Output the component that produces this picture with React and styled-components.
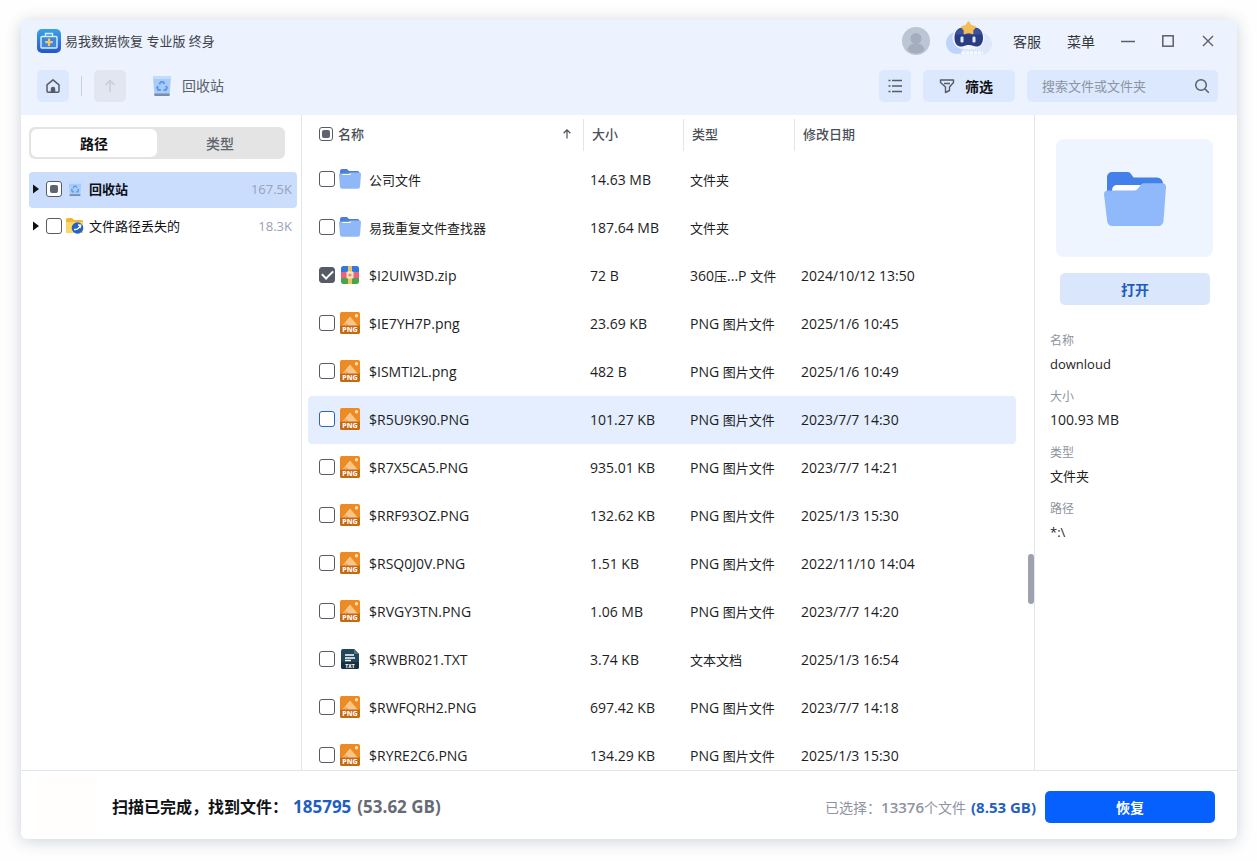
import React, { Component } from 'react';
import styled, { createGlobalStyle, css } from 'styled-components';

const GlobalStyle = createGlobalStyle`
  * {
    box-sizing: border-box;
  }

  body {
    margin: 0;
    background: #fefefe;
    color: #1c1e22;
    font-family: 'Open Sans', 'Noto Sans CJK SC', sans-serif;
    font-size: 13px;
    line-height: 20px;
  }

  button,
  input {
    font-family: inherit;
  }

  svg {
    display: block;
    flex: none;
  }
`;

const Page = styled.div`
  height: 100vh;
  padding: 20px 20px 22px 21px;
`;
const Window = styled.div`
  height: 100%;
  display: flex;
  flex-direction: column;
  overflow: hidden;
  border-radius: 6px;
  background: #ffffff;
  box-shadow: 0 2px 16px rgba(50, 65, 105, 0.24);
`;

/* header */
const Header = styled.header`
  background: #ecf3fe;
`;
const TitleBar = styled.div`
  height: 42px;
  padding: 0 9px 0 16px;
  display: flex;
  align-items: center;
`;
const Title = styled.h1`
  margin: 0 auto 0 4px;
  font-size: 13px;
  font-weight: 400;
  color: #3c4048;
`;
const RoundButton = styled.button`
  margin-right: ${props => props.$gap}px;
  padding: 0;
  border: 0;
  background: none;
`;
const MenuButton = styled.button`
  padding: 0 13px;
  border: 0;
  background: none;
  font-size: 14px;
  color: #33363d;
`;
const WindowButton = styled.button`
  width: 40px;
  height: 32px;
  padding: 0;
  border: 0;
  display: flex;
  align-items: center;
  justify-content: center;
  background: none;
  color: #5b5f68;
`;
const Toolbar = styled.div`
  padding: 8px 19px 13px 16px;
  display: flex;
  align-items: center;
  gap: 12px;
`;
const ToolButton = styled.button`
  min-width: 32px;
  height: 32px;
  padding: ${props => props.$wide ? '0 22px 0 16px' : '0'};
  border: 0;
  border-radius: 5px;
  display: flex;
  align-items: center;
  justify-content: center;
  gap: 10px;
  background: #dbe8fd;
  color: #565b66;

  &:disabled {
    background: #e1e6f0;
    color: #c9ced8;
  }
`;
const ToolLabel = styled.span`
  font-size: 14px;
  font-weight: 700;
  color: #0f1115;
`;
const Divider = styled.span`
  width: 1px;
  height: 20px;
  background: #c9d0dc;
`;
const Crumb = styled.div`
  margin: 0 auto 0 14px;
  display: flex;
  align-items: center;
  gap: 10px;
  font-size: 14px;
  color: #5a5f69;
`;
const Search = styled.label`
  width: 191px;
  height: 32px;
  padding: 0 8px 0 15px;
  border-radius: 5px;
  display: flex;
  align-items: center;
  background: #dbe8fd;
  color: #5b5f68;
`;
const SearchInput = styled.input`
  flex: 1;
  min-width: 0;
  padding: 0;
  border: 0;
  outline: 0;
  background: none;
  font-size: 13px;

  &::placeholder {
    color: #8e94a1;
    opacity: 1;
  }
`;

/* body */
const Body = styled.div`
  flex: 1;
  min-height: 0;
  display: flex;
`;
const Sidebar = styled.aside`
  width: 281px;
  flex: none;
  padding: 12px 4px 0 8px;
  border-right: 1px solid #e2e6ec;
`;
const Tabs = styled.div`
  height: 32px;
  margin: 0 12px 13px 0;
  padding: 2px;
  border-radius: 6px;
  display: flex;
  background: #e4e4e5;
`;
const Tab = styled.button`
  flex: 1;
  padding: 0;
  border: 0;
  border-radius: 6px;
  font-size: 14px;
  font-weight: ${props => props.$active ? '700' : '500'};
  color: ${props => props.$active ? '#0f1115' : '#5f646e'};
  background: ${props => props.$active ? '#ffffff' : 'none'};
`;
const TreeRow = styled.div`
  height: 36px;
  margin-bottom: 1px;
  padding: 0 5px 2px 4px;
  border-radius: 4px;
  display: flex;
  align-items: center;
  background: ${props => props.$active ? '#cbddfd' : 'none'};
`;
const TreeLabel = styled.label`
  flex: 1;
  margin-left: 4px;
  display: flex;
  align-items: center;
  gap: 5px;
  font-weight: ${props => props.$active ? '700' : '400'};
  color: #0f1115;
`;
const TreeIcon = styled.span`
  width: 18px;
  display: flex;
  justify-content: center;
`;
const TreeCount = styled.span`
  font-size: 13px;
  color: #97a1ba;
`;
const Checkbox = styled.input.attrs({ type: 'checkbox' })`
  appearance: none;
  flex: none;
  width: ${props => props.$small ? 14 : 16}px;
  height: ${props => props.$small ? 14 : 16}px;
  margin: 0;
  border: 1px solid ${props => props.$hot ? '#2c62b8' : '#565b66'};
  border-radius: 3px;
  display: flex;
  align-items: center;
  justify-content: center;
  background: #ffffff;

  &:checked {
    background: #565b66;
  }

  &:checked::before {
    content: '';
    width: 9px;
    height: 5px;
    margin-bottom: 3px;
    border: solid #ffffff;
    border-width: 0 0 2px 2px;
    transform: rotate(-45deg);
  }

  ${props => props.$partial && css`
    &::before {
      content: '';
      width: 8px;
      height: 8px;
      border-radius: 2px;
      background: #5f646e;
    }
  `}
`;

/* file list */
const ListArea = styled.main`
  position: relative;
  flex: 1;
  min-width: 0;
`;
const ListScroll = styled.div`
  height: 100%;
  padding: 0 18px 0 6px;
  overflow-y: auto;
  scrollbar-width: none;
`;
const ScrollThumb = styled.div`
  position: absolute;
  right: 0;
  top: 67%;
  width: 6px;
  height: 50px;
  border-radius: 3px;
  background: #9da2ae;
`;
const Table = styled.table`
  width: 100%;
  table-layout: fixed;
  border-collapse: separate;
  border-spacing: 0;
`;
const Th = styled.th`
  width: ${props => props.$width || 'auto'};
  height: 41px;
  padding: 0 0 1px;
  font-weight: 500;
  text-align: left;
  color: #4b4f58;
`;
const HeadCell = styled.div`
  height: 32px;
  padding: 0 10px 2px ${props => props.$first ? '11px' : '8px'};
  border-left: ${props => props.$first ? '0' : '1px solid #e2e6ec'};
  display: flex;
  align-items: center;
  gap: 5px;

  svg {
    margin-left: auto;
  }
`;
const Row = styled.tr`
  td {
    background: ${props => props.$active ? '#e4eefe' : 'none'};
  }
`;
const Td = styled.td`
  height: 48px;
  padding: 0 0 0 7px;
  white-space: nowrap;

  &:first-child {
    padding-left: 11px;
    border-radius: 4px 0 0 4px;
  }

  &:last-child {
    border-radius: 0 4px 4px 0;
  }
`;
const FileCell = styled.div`
  display: flex;
  align-items: center;
  gap: 4px;

  input,
  svg {
    margin-bottom: 2px;
  }
`;
const FileLabel = styled.label`
  display: flex;
  align-items: center;
  gap: 8px;
`;
const Latin = styled.span`
  font-size: 14px;
`;

/* details */
const Details = styled.aside`
  width: 203px;
  flex: none;
  padding: 24px 24px 0 15px;
  border-left: 1px solid #e2e6ec;
`;
const Preview = styled.div`
  height: 118px;
  margin-left: 6px;
  padding-top: 2px;
  border-radius: 8px;
  display: flex;
  align-items: center;
  justify-content: center;
  background: #eff5fe;
`;
const OpenButton = styled.button`
  display: block;
  width: 150px;
  height: 32px;
  margin: 16px 0 24px 10px;
  padding: 0;
  border: 0;
  border-radius: 5px;
  background: #dae6fc;
  font-size: 14px;
  font-weight: 700;
  color: #1a5bbf;
`;
const Info = styled.dl`
  margin: 0;
`;
const InfoLabel = styled.dt`
  font-size: 12px;
  line-height: 24px;
  color: #8e94a1;
`;
const InfoValue = styled.dd`
  margin: 0 0 10px;
  line-height: 22px;
`;

/* footer */
const Footer = styled.footer`
  padding: 4px 22px 0 16px;
  border-top: 1px solid #e2e6ec;
  display: flex;
  align-items: center;
`;
const ScanMark = styled.div`
  width: 60px;
  height: 60px;
  margin: 0 15px 4px 0;
  background: #fffefd;
`;
const Found = styled.div`
  margin-right: auto;
  font-size: 16px;
  font-weight: 600;
  color: #0f1115;
`;
const Strong = styled.strong`
  margin-left: ${props => props.$gap}px;
  font-size: ${props => props.$large ? '17px' : '15px'};
  font-weight: 700;
  color: ${props => props.$muted ? '#666b75' : '#1f5fc2'};
`;
const Selected = styled.div`
  margin-right: 9px;
  font-size: 14px;
  color: #8e94a1;
`;
const SelectedCount = styled.span`
  font-size: 15px;
  font-weight: 600;
`;
const RestoreButton = styled.button`
  width: 170px;
  height: 32px;
  padding: 0;
  border: 0;
  border-radius: 5px;
  background: #0560fd;
  font-size: 14px;
  font-weight: 700;
  color: #ffffff;
`;

const Logo = () => (
  <svg width="24" height="24" viewBox="0 0 24 24" fill="none">
    <defs>
      <linearGradient id="logo" x1="0" y1="0" x2="0" y2="1">
        <stop offset="0" stopColor="#3aa3e6" />
        <stop offset="1" stopColor="#2457c9" />
      </linearGradient>
    </defs>
    <rect width="24" height="24" rx="5" fill="url(#logo)" />
    <rect x="4" y="7.500" width="16" height="11.500" rx="1" fill="#3f86de" stroke="#d6efff" strokeWidth="1.400" />
    <path d="M8.500 7.500V4.500h7v3" stroke="#d6efff" strokeWidth="1.400" />
    <path d="M12 9.500v7.500M8.200 13.200h7.600" stroke="#f6c667" strokeWidth="2.200" />
  </svg>
);

const AvatarIcon = () => (
  <svg width="28" height="28" viewBox="0 0 28 28">
    <circle cx="14" cy="14" r="14" fill="#bcc5d3" />
    <circle cx="14" cy="11.500" r="5.500" fill="#a3adbd" />
    <path d="M5.500 23c.5-4.500 4-6.500 8.500-6.500s8 2 8.500 6.500a12 12 0 0 1-17 0z" fill="#a3adbd" />
  </svg>
);

const RobotIcon = () => (
  <svg width="46" height="40" viewBox="0 0 46 40">
    <rect x="12" y="12" width="34" height="22" rx="11" fill="#dfe8fb" />
    <circle cx="11" cy="22" r="11" fill="#bed4fa" />
    <path d="M14 34c1-5 5-8 9-8s13 3 14 8z" fill="#dfe8fb" />
    <rect x="6.500" y="6" width="32" height="22" rx="11" fill="#eff4fd" />
    <path d="M17 6.500h11.500c5.500 0 8.500 4.500 8.500 10.500 0 6-3 8.500-6.500 8.500-3 0-4-1.500-7.700-1.500s-4.600 1.500-7.600 1.500C11.500 25.500 8.500 23 8.500 17c0-6 3-10.500 8.500-10.500z" fill="#2a3c82" />
    <path d="M17 7h11.500c4.500 0 7 3 8 6.500H9.200c1-3.500 3.300-6.500 7.800-6.500z" fill="#3a519d" />
    <rect x="14.500" y="15.500" width="3" height="6" rx="1.200" fill="#dce8ff" />
    <rect x="26.500" y="15.500" width="3" height="6" rx="1.200" fill="#dce8ff" />
    <path d="M22.500 1l2.300 3.400 4.500 1.600-2.800 3.200.2 3.300-4.200-1.300-4.200 1.300.2-3.300-2.800-3.200 4.500-1.600z" fill="#f4bd55" stroke="#f4bd55" strokeWidth="1.500" strokeLinejoin="round" />
    <path d="M16 32h21" stroke="#f8faff" strokeWidth="3" strokeDasharray="3 1" />
  </svg>
);

const HomeIcon = () => (
  <svg width="16" height="16" viewBox="0 0 16 16" fill="none" stroke="currentColor" strokeWidth="1.500" strokeLinejoin="round">
    <path d="M2 6.800L8 1.800l6 5V13a1.200 1.200 0 0 1-1.200 1.200H3.200A1.200 1.200 0 0 1 2 13z" />
    <path d="M6.500 14v-3a1.500 1.500 0 0 1 3 0v3z" fill="currentColor" />
  </svg>
);

const ArrowUpIcon = ({ size }) => (
  <svg width={size} height={size} viewBox="0 0 16 16" fill="none" stroke="currentColor" strokeWidth="1.600">
    <path d="M8 14V2.500M3.500 7L8 2.500 12.500 7" />
  </svg>
);

const BinIcon = ({ size }) => (
  <svg width={size} height={size} viewBox="0 0 20 20" fill="none">
    <path d="M1 0h18l-1.500 20h-15z" fill="#a9cbf8" />
    <path d="M1 0h18l-.3 3H1.300z" fill="#c3dcfb" />
    <path d="M2.300 17.500h15.400l-.2 2.500h-15z" fill="#7d8ca6" />
    <g stroke="#5a99ec" strokeWidth="1.900">
      <path d="M7.300 8.300l1.600-2.400h2.200l1.400 2.200" />
      <path d="M14 9.800l1 2-1.200 2.200h-2.300" />
      <path d="M8.800 14H6.300l-1.200-2.200 1.100-1.900" />
    </g>
  </svg>
);

const LostFolderIcon = () => (
  <svg width="18" height="18" viewBox="0 0 18 18">
    <path d="M0 2.500A1.500 1.500 0 0 1 1.500 1H6l2 2h7.500A1.500 1.500 0 0 1 17 4.500V16H1.500A1.500 1.500 0 0 1 0 14.500z" fill="#f2b632" />
    <path d="M0 5h17v9.500a1.500 1.500 0 0 1-1.500 1.500h-14A1.500 1.500 0 0 1 0 14.500z" fill="#fbd768" />
    <circle cx="11.500" cy="11" r="5.800" fill="#2563c4" />
    <path d="M8 12.500c2 .3 5-1 6.500-4M12 8l2.700.2-.6 2.800" stroke="#ffffff" strokeWidth="1.400" fill="none" />
  </svg>
);

const ListIcon = () => (
  <svg width="16" height="16" viewBox="0 0 16 16" fill="none" stroke="currentColor" strokeWidth="1.300">
    <path d="M5 2.500H15M5 8H15M5 13.500H15M1.500 2.500h2M1.500 8h2M1.500 13.500h2" />
  </svg>
);

const FilterIcon = () => (
  <svg width="16" height="16" viewBox="0 0 16 16" fill="none" stroke="currentColor" strokeWidth="1.400" strokeLinejoin="round">
    <path d="M1.500 2h13v2.500L10.500 9v3.500l-4 2V9l-5-4.500z" />
    <path d="M5 5.500h6" />
  </svg>
);

const SearchIcon = () => (
  <svg width="16" height="16" viewBox="0 0 16 16" fill="none" stroke="currentColor" strokeWidth="1.500">
    <circle cx="7" cy="7" r="5.300" />
    <path d="M11 11l3.800 3.800" />
  </svg>
);

const MinimizeIcon = () => (
  <svg width="14" height="14" viewBox="0 0 14 14" stroke="currentColor" strokeWidth="1.300"><path d="M0 7.500h14" /></svg>
);

const MaximizeIcon = () => (
  <svg width="14" height="14" viewBox="0 0 14 14" fill="none" stroke="currentColor" strokeWidth="1.500"><rect x="1.800" y="1.800" width="10.400" height="10.400" /></svg>
);

const CloseIcon = () => (
  <svg width="14" height="14" viewBox="0 0 14 14" stroke="currentColor" strokeWidth="1.400"><path d="M2 2l10 10M12 2L2 12" /></svg>
);

const CaretIcon = () => (
  <svg width="13" height="10" viewBox="0 0 13 10"><path d="M0 .5l6 4.500-6 4.500z" fill="#0f1115" /></svg>
);

const FolderIcon = () => (
  <svg width="22" height="22" viewBox="0 0 22 22">
    <path d="M1 3a2 2 0 0 1 2-2h5l2 2h8.500a2 2 0 0 1 2 2V12H1z" fill="#4a7fdc" />
    <path d="M0 6.700A1.200 1.200 0 0 1 1.200 5.500H9.500l2-1h9A1.500 1.500 0 0 1 22 6L21 19a2 2 0 0 1-2 1.700H3A2 2 0 0 1 1 19z" fill="#8fb8f8" />
    <path d="M3.500 6.500H10.500l1.200-.8" stroke="#ffffff" strokeWidth="1.200" fill="none" />
  </svg>
);

const BigFolder = () => (
  <svg width="62" height="54" viewBox="0 0 62 54">
    <path d="M3 5a5 5 0 0 1 5-5h15c2 0 3 .6 4 2l2.500 3.500H53a6 6 0 0 1 6 6V30H3z" fill="#4480e9" />
    <path d="M8 19c0-4 2-6 5-6h24L33 19z" fill="#ffffff" />
    <path d="M0 22.500A4 4 0 0 1 4 18.500h26c2 0 3-.7 4-2l2.500-3.200c1-1.400 2-2 4-2H58c2.600 0 4.200 1.500 4 4L59.500 49a5.300 5.300 0 0 1-5.500 5H8.500a5.300 5.300 0 0 1-5.300-4.700z" fill="#8fb9fa" />
  </svg>
);

const ZipIcon = () => (
  <svg width="22" height="20" viewBox="0 0 22 20">
    <defs>
      <clipPath id="zip"><rect x="2" y="1" width="18" height="18" rx="2.500" /></clipPath>
    </defs>
    <g clipPath="url(#zip)">
      <path d="M2 1h18v6H2z" fill="#2f78dc" />
      <path d="M2 7h18v6H2z" fill="#ea6379" />
      <path d="M2 13h18v6H2z" fill="#4aa54a" />
      <path d="M9 1h4v18H9z" fill="#e7c765" />
      <rect x="7.500" y="6.500" width="7" height="7" rx="1" fill="#fbe3c4" />
      <circle cx="11" cy="10" r="1.600" fill="#e58a6c" />
    </g>
  </svg>
);

const TagText = styled.text`
  font-family: 'Noto Sans', sans-serif;
  font-weight: 800;
  fill: #ffffff;
  text-anchor: middle;
`;

const PngIcon = () => (
  <svg width="22" height="22" viewBox="0 0 22 22">
    <rect x="1" width="20" height="22" rx="2" fill="#ee8a22" />
    <path d="M2.500 14.500L11 4.500l8.500 10z" fill="#fbc488" />
    <path d="M2.500 14.500l4.500-4 4 4z" fill="#f6ac5c" />
    <circle cx="17.500" cy="3.800" r="1.700" fill="#fde0b8" />
    <path d="M1 13.500h20V20a2 2 0 0 1-2 2H3a2 2 0 0 1-2-2z" fill="#c66a12" />
    <TagText x="11" y="20.300" fontSize="7">PNG</TagText>
  </svg>
);

const TxtIcon = () => (
  <svg width="22" height="22" viewBox="0 0 22 22">
    <path d="M2 3a2 2 0 0 1 2-2h11l5 5v13a2 2 0 0 1-2 2H4a2 2 0 0 1-2-2z" fill="#22475a" />
    <path d="M2 14h18v5a2 2 0 0 1-2 2H4a2 2 0 0 1-2-2z" fill="#16303f" />
    <path d="M15 1l5 5h-5z" fill="#4a7186" />
    <path d="M6 7h9M6 10h10M6 12.500h6" stroke="#ffffff" strokeWidth="1.300" />
    <TagText x="11" y="20" fontSize="5">TXT</TagText>
  </svg>
);

const ICONS = {
  folder: FolderIcon,
  zip: ZipIcon,
  png: PngIcon,
  txt: TxtIcon,
};

const PNG_TYPE = 'PNG 图片文件';

const FILES = [
  { icon: 'folder', name: '公司文件', size: '14.63 MB', type: '文件夹', date: '' },
  { icon: 'folder', name: '易我重复文件查找器', size: '187.64 MB', type: '文件夹', date: '' },
  { icon: 'zip', name: '$I2UIW3D.zip', size: '72 B', type: '360压...P 文件', date: '2024/10/12 13:50', checked: true },
  { icon: 'png', name: '$IE7YH7P.png', size: '23.69 KB', type: PNG_TYPE, date: '2025/1/6 10:45' },
  { icon: 'png', name: '$ISMTI2L.png', size: '482 B', type: PNG_TYPE, date: '2025/1/6 10:49' },
  { icon: 'png', name: '$R5U9K90.PNG', size: '101.27 KB', type: PNG_TYPE, date: '2023/7/7 14:30', active: true },
  { icon: 'png', name: '$R7X5CA5.PNG', size: '935.01 KB', type: PNG_TYPE, date: '2023/7/7 14:21' },
  { icon: 'png', name: '$RRF93OZ.PNG', size: '132.62 KB', type: PNG_TYPE, date: '2025/1/3 15:30' },
  { icon: 'png', name: '$RSQ0J0V.PNG', size: '1.51 KB', type: PNG_TYPE, date: '2022/11/10 14:04' },
  { icon: 'png', name: '$RVGY3TN.PNG', size: '1.06 MB', type: PNG_TYPE, date: '2023/7/7 14:20' },
  { icon: 'txt', name: '$RWBR021.TXT', size: '3.74 KB', type: '文本文档', date: '2025/1/3 16:54' },
  { icon: 'png', name: '$RWFQRH2.PNG', size: '697.42 KB', type: PNG_TYPE, date: '2023/7/7 14:18' },
  { icon: 'png', name: '$RYRE2C6.PNG', size: '134.29 KB', type: PNG_TYPE, date: '2025/1/3 15:30' },
];

const INFO = [
  ['名称', 'downloud'],
  ['大小', '100.93 MB'],
  ['类型', '文件夹'],
  ['路径', '*:\\'],
];

// Capitals and digits are set one size up from the Chinese text around them
const MixedText = ({ text }) => text.split(/([\x20-\x7e]+)/).map((part, i) => (
  /[A-Z0-9]/.test(part) ? <Latin key={i}>{part}</Latin> : part
));

const FileRow = ({ file }) => {
  const Icon = ICONS[file.icon];
  const id = `file-${file.name}`;
  return (
    <Row $active={file.active}>
      <Td>
        <FileCell>
          <Checkbox id={id} defaultChecked={file.checked} $hot={file.active} />
          <FileLabel htmlFor={id}><Icon /><span><MixedText text={file.name} /></span></FileLabel>
        </FileCell>
      </Td>
      <Td><MixedText text={file.size} /></Td>
      <Td><MixedText text={file.type} /></Td>
      <Td><MixedText text={file.date} /></Td>
    </Row>
  );
};

class App extends Component {
  render() {
    return (
      <Page>
        <GlobalStyle />
        <Window>
          <Header>
            <TitleBar>
              <Logo />
              <Title>易我数据恢复 专业版 终身</Title>
              <RoundButton $gap={16} aria-label="账户"><AvatarIcon /></RoundButton>
              <RoundButton $gap={8} aria-label="助手"><RobotIcon /></RoundButton>
              <MenuButton>客服</MenuButton>
              <MenuButton>菜单</MenuButton>
              <WindowButton aria-label="最小化"><MinimizeIcon /></WindowButton>
              <WindowButton aria-label="最大化"><MaximizeIcon /></WindowButton>
              <WindowButton aria-label="关闭"><CloseIcon /></WindowButton>
            </TitleBar>
            <Toolbar>
              <ToolButton aria-label="主页"><HomeIcon /></ToolButton>
              <Divider />
              <ToolButton aria-label="向上" disabled><ArrowUpIcon size={16} /></ToolButton>
              <Crumb><BinIcon size={20} />回收站</Crumb>
              <ToolButton aria-label="列表视图"><ListIcon /></ToolButton>
              <ToolButton $wide><FilterIcon /><ToolLabel>筛选</ToolLabel></ToolButton>
              <Search>
                <SearchInput type="text" aria-label="搜索" placeholder="搜索文件或文件夹" />
                <SearchIcon />
              </Search>
            </Toolbar>
          </Header>
          <Body>
            <Sidebar>
              <Tabs>
                <Tab $active>路径</Tab>
                <Tab>类型</Tab>
              </Tabs>
              <TreeRow $active>
                <CaretIcon />
                <Checkbox id="tree-bin" $partial />
                <TreeLabel htmlFor="tree-bin" $active><TreeIcon><BinIcon size={14} /></TreeIcon>回收站</TreeLabel>
                <TreeCount>167.5K</TreeCount>
              </TreeRow>
              <TreeRow>
                <CaretIcon />
                <Checkbox id="tree-lost" />
                <TreeLabel htmlFor="tree-lost"><TreeIcon><LostFolderIcon /></TreeIcon>文件路径丢失的</TreeLabel>
                <TreeCount>18.3K</TreeCount>
              </TreeRow>
            </Sidebar>
            <ListArea>
              <ListScroll>
                <Table>
                  <thead>
                    <tr>
                      <Th>
                        <HeadCell $first>
                          <Checkbox id="all" $small $partial />
                          <label htmlFor="all">名称</label>
                          <ArrowUpIcon size={12} />
                        </HeadCell>
                      </Th>
                      <Th $width="100px"><HeadCell>大小</HeadCell></Th>
                      <Th $width="111px"><HeadCell>类型</HeadCell></Th>
                      <Th $width="222px"><HeadCell>修改日期</HeadCell></Th>
                    </tr>
                  </thead>
                  <tbody>
                    {FILES.map(file => <FileRow key={file.name} file={file} />)}
                  </tbody>
                </Table>
              </ListScroll>
              <ScrollThumb />
            </ListArea>
            <Details>
              <Preview><BigFolder /></Preview>
              <OpenButton>打开</OpenButton>
              <Info>
                {INFO.map(([label, value]) => (
                  <React.Fragment key={label}>
                    <InfoLabel>{label}</InfoLabel>
                    <InfoValue><MixedText text={value} /></InfoValue>
                  </React.Fragment>
                ))}
              </Info>
            </Details>
          </Body>
          <Footer>
            <ScanMark />
            <Found>
              扫描已完成，找到文件：
              <Strong $large $gap={5}>185795</Strong>
              <Strong $large $muted $gap={6}>(53.62 GB)</Strong>
            </Found>
            <Selected>
              已选择：<SelectedCount>13376</SelectedCount>个文件
              <Strong $gap={5}>(8.53 GB)</Strong>
            </Selected>
            <RestoreButton>恢复</RestoreButton>
          </Footer>
        </Window>
      </Page>
    );
  }
}

export default App;
